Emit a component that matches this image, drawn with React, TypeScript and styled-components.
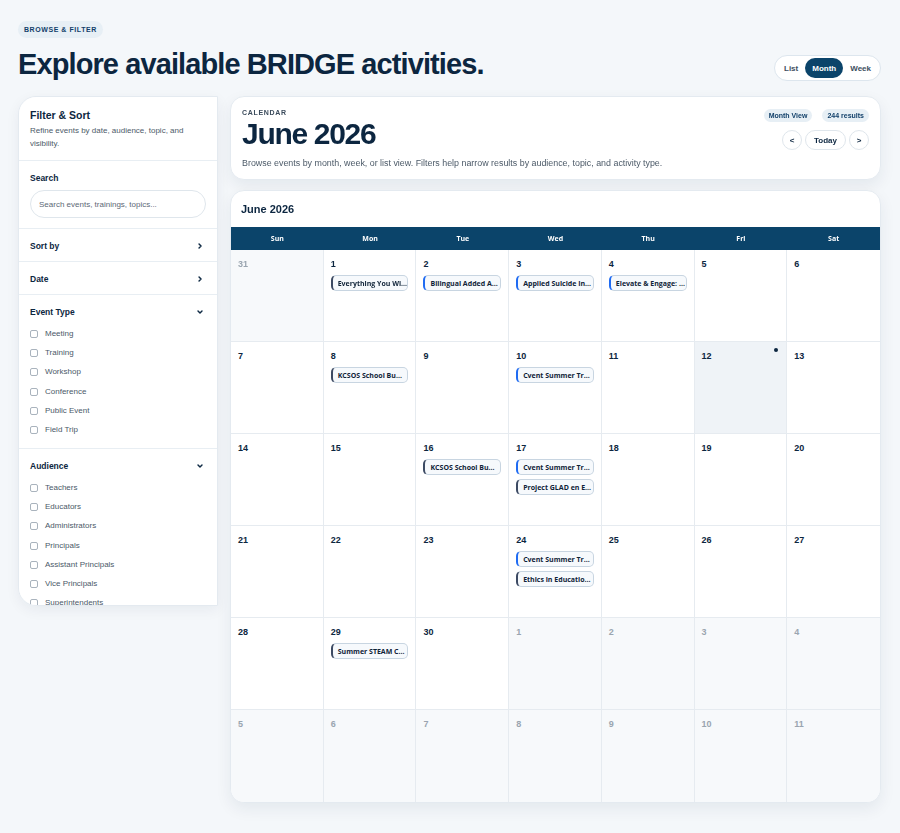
import React, { useState } from "react";
import styled, { createGlobalStyle } from "styled-components";

const GlobalStyle = createGlobalStyle`
  html, body {
    margin: 0;
    padding: 0;
    background: #f4f7fa;
    font-family: "Liberation Sans", Arial, sans-serif;
    color: #0f2a44;
    -webkit-font-smoothing: antialiased;
  }
  * { box-sizing: border-box; }
`;

type Ev = { title: string; tone: "blue" | "slate" };

const events: Record<number, Ev[]> = {
  1: [{ title: "Everything You Wi...", tone: "slate" }],
  2: [{ title: "Bilingual Added A...", tone: "blue" }],
  3: [{ title: "Applied Suicide In...", tone: "blue" }],
  4: [{ title: "Elevate & Engage: ...", tone: "blue" }],
  8: [{ title: "KCSOS School Bu...", tone: "slate" }],
  10: [{ title: "Cvent Summer Tr...", tone: "blue" }],
  16: [{ title: "KCSOS School Bu...", tone: "slate" }],
  17: [
    { title: "Cvent Summer Tr...", tone: "blue" },
    { title: "Project GLAD en E...", tone: "slate" },
  ],
  24: [
    { title: "Cvent Summer Tr...", tone: "blue" },
    { title: "Ethics in Educatio...", tone: "slate" },
  ],
  29: [{ title: "Summer STEAM C...", tone: "slate" }],
};

const weekdays = ["Sun", "Mon", "Tue", "Wed", "Thu", "Fri", "Sat"];

const eventTypes = ["Meeting", "Training", "Workshop", "Conference", "Public Event", "Field Trip"];
const audiences = [
  "Teachers",
  "Educators",
  "Administrators",
  "Principals",
  "Assistant Principals",
  "Vice Principals",
  "Superintendents",
  "Counselors",
  "Parents",
];
const visibility = ["Public", "Internal"];

const buildCells = () => {
  const cells: { day: number; outside: boolean }[] = [{ day: 31, outside: true }];
  for (let d = 1; d <= 30; d++) cells.push({ day: d, outside: false });
  for (let d = 1; d <= 11; d++) cells.push({ day: d, outside: true });
  return cells;
};

const Chevron = ({ open }: { open?: boolean }) => (
  <svg width="8" height="8" viewBox="0 0 10 10" fill="none">
    <path
      d={open ? "M2.5 3.8 L5 6.3 L7.5 3.8" : "M3.8 2.5 L6.3 5 L3.8 7.5"}
      stroke="#0f2a44"
      strokeWidth="1.8"
      strokeLinecap="round"
      strokeLinejoin="round"
    />
  </svg>
);

const App = () => {
  const [view, setView] = useState("Month");
  const cells = buildCells();

  return (
    <Page>
      <GlobalStyle />
      <TopBar>
        <div>
          <Eyebrow>Browse &amp; Filter</Eyebrow>
          <Title>Explore available BRIDGE activities.</Title>
        </div>
        <Toggle>
          {["List", "Month", "Week"].map((v) => (
            <ToggleBtn key={v} $active={view === v} onClick={() => setView(v)}>
              {v}
            </ToggleBtn>
          ))}
        </Toggle>
      </TopBar>

      <Layout>
        <Sidebar>
          <SideIntro>
            <SideTitle>Filter &amp; Sort</SideTitle>
            <SideText>Refine events by date, audience, topic, and visibility.</SideText>
          </SideIntro>
          <Section>
            <SectionLabel>Search</SectionLabel>
            <SearchInput placeholder="Search events, trainings, topics..." />
          </Section>
          <Section>
            <SectionHead>
              Sort by <Chevron />
            </SectionHead>
          </Section>
          <Section>
            <SectionHead>
              Date <Chevron />
            </SectionHead>
          </Section>
          <Section>
            <SectionHead>
              Event Type <Chevron open />
            </SectionHead>
            <CheckList>
              {eventTypes.map((t) => (
                <CheckRow key={t}>
                  <Box />
                  {t}
                </CheckRow>
              ))}
            </CheckList>
          </Section>
          <Section>
            <SectionHead>
              Audience <Chevron open />
            </SectionHead>
            <ScrollList>
              {audiences.map((t) => (
                <CheckRow key={t}>
                  <Box />
                  {t}
                </CheckRow>
              ))}
            </ScrollList>
          </Section>
          <Section>
            <SectionHead>
              Visibility <Chevron open />
            </SectionHead>
            <CheckList>
              {visibility.map((t) => (
                <CheckRow key={t}>
                  <Box />
                  {t}
                </CheckRow>
              ))}
            </CheckList>
          </Section>
        </Sidebar>

        <Main>
          <HeaderCard>
            <div>
              <Kicker>Calendar</Kicker>
              <MonthTitle>June 2026</MonthTitle>
              <HeaderText>
                Browse events by month, week, or list view. Filters help narrow results by audience, topic, and
                activity type.
              </HeaderText>
            </div>
            <HeaderSide>
              <Badges>
                <Badge>Month View</Badge>
                <Badge>244 results</Badge>
              </Badges>
              <NavRow>
                <NavBtn>&lt;</NavBtn>
                <NavBtn $wide>Today</NavBtn>
                <NavBtn>&gt;</NavBtn>
              </NavRow>
            </HeaderSide>
          </HeaderCard>

          <CalendarCard>
            <CalTitle>June 2026</CalTitle>
            <WeekHead>
              {weekdays.map((w) => (
                <WeekDay key={w}>{w}</WeekDay>
              ))}
            </WeekHead>
            <Grid>
              {cells.map((c, i) => {
                const today = !c.outside && c.day === 12;
                return (
                  <Cell key={i} $outside={c.outside} $today={today}>
                    <DayNum $outside={c.outside}>{c.day}</DayNum>
                    {today && <TodayDot />}
                    {!c.outside &&
                      (events[c.day] || []).map((e, j) => (
                        <Chip key={j} $tone={e.tone}>
                          {e.title}
                        </Chip>
                      ))}
                  </Cell>
                );
              })}
            </Grid>
          </CalendarCard>
        </Main>
      </Layout>
    </Page>
  );
};

const Page = styled.div`
  width: 900px;
  min-height: 833px;
  padding: 21px 19px 32px 18px;
`;

const TopBar = styled.div`
  display: flex;
  justify-content: space-between;
  align-items: flex-end;
  margin-bottom: 14px;
`;

const Eyebrow = styled.div`
  width: fit-content;
  background: #e7eff5;
  color: #12406a;
  font-size: 7px;
  line-height: 7px;
  font-weight: 700;
  letter-spacing: 0.08em;
  text-transform: uppercase;
  padding: 5px 6px;
  border-radius: 9px;
  margin-bottom: 8px;
`;

const Title = styled.h1`
  margin: 0;
  font-size: 29px;
  line-height: 36px;
  font-weight: 700;
  letter-spacing: -0.9px;
  color: #0c2640;
`;

const Toggle = styled.div`
  display: flex;
  align-items: center;
  background: #fff;
  border: 1px solid #dde6ee;
  border-radius: 14px;
  padding: 2px;
  margin-bottom: 1px;
`;

const ToggleBtn = styled.button<{ $active?: boolean }>`
  border: 0;
  cursor: pointer;
  font-family: "Liberation Sans", Arial, sans-serif;
  font-size: 8px;
  font-weight: 700;
  height: 20px;
  padding: 0 7px;
  border-radius: 10px;
  background: ${(p) => (p.$active ? "#0b446a" : "transparent")};
  color: ${(p) => (p.$active ? "#fff" : "#3d4e60")};
`;

const Layout = styled.div`
  display: grid;
  grid-template-columns: 200px 1fr;
  gap: 12px;
  align-items: start;
`;

const Sidebar = styled.aside`
  height: 510px;
  overflow-y: scroll;
  background: #fff;
  border: 1px solid #e4eaf0;
  border-radius: 18px 0 0 18px;
  box-shadow: 0 4px 14px rgba(15, 42, 68, 0.06);
  scrollbar-width: thin;
  scrollbar-color: #c2c2c2 #f1f1f1;
`;

const SideIntro = styled.div`
  padding: 12px 11px 10px;
  border-bottom: 1px solid #e8eef3;
`;

const SideTitle = styled.div`
  font-size: 10.5px;
  line-height: 12px;
  font-weight: 700;
  color: #0c2640;
  margin-bottom: 3px;
`;

const SideText = styled.div`
  font-size: 8px;
  line-height: 13px;
  color: #4c5a68;
`;

const Section = styled.div`
  padding: 12px 11px 10px;
  border-bottom: 1px solid #e8eef3;
`;

const SectionLabel = styled.div`
  font-size: 8.5px;
  line-height: 10px;
  font-weight: 700;
  color: #0c2640;
  margin-bottom: 7px;
`;

const SectionHead = styled.div`
  display: flex;
  justify-content: space-between;
  align-items: center;
  font-size: 8.5px;
  line-height: 10px;
  font-weight: 700;
  color: #0c2640;
  padding-right: 2px;
`;

const SearchInput = styled.input`
  width: 100%;
  height: 28px;
  border: 1px solid #dfe6ec;
  border-radius: 14px;
  padding: 0 8px;
  font-family: "Liberation Sans", Arial, sans-serif;
  font-size: 8px;
  color: #0c2640;
  outline: none;
  &::placeholder {
    color: #5d6976;
  }
`;

const CheckList = styled.div`
  display: flex;
  flex-direction: column;
  gap: 9.2px;
  margin-top: 12px;
  padding-bottom: 3px;
`;

const ScrollList = styled(CheckList)`
  max-height: 150px;
  overflow-y: scroll;
  scrollbar-width: thin;
  scrollbar-color: #c2c2c2 transparent;
`;

const CheckRow = styled.label`
  display: flex;
  align-items: center;
  gap: 7px;
  font-size: 8px;
  color: #4a5968;
  line-height: 10px;
  white-space: nowrap;
`;

const Box = styled.span`
  width: 8px;
  height: 8px;
  border: 1px solid #a9b3bd;
  border-radius: 2px;
  background: #fff;
  flex-shrink: 0;
`;

const Main = styled.div`
  display: flex;
  flex-direction: column;
  gap: 10px;
`;

const Card = styled.div`
  background: #fff;
  border: 1px solid #e4eaf0;
  border-radius: 14px;
  box-shadow: 0 6px 16px rgba(15, 42, 68, 0.07);
`;

const HeaderCard = styled(Card)`
  height: 84px;
  padding: 12px 11px 0 11px;
  display: flex;
  justify-content: space-between;
`;

const Kicker = styled.div`
  font-size: 7px;
  font-weight: 700;
  letter-spacing: 0.1em;
  text-transform: uppercase;
  color: #3b4b5c;
`;

const MonthTitle = styled.div`
  font-size: 30px;
  line-height: 32px;
  font-weight: 700;
  letter-spacing: -1.3px;
  color: #0c2640;
  margin-top: 2px;
`;

const HeaderText = styled.div`
  font-size: 8.9px;
  color: #4c5a68;
  margin-top: 8px;
  white-space: nowrap;
`;

const HeaderSide = styled.div`
  display: flex;
  flex-direction: column;
  align-items: flex-end;
  gap: 8px;
`;

const Badges = styled.div`
  display: flex;
  gap: 10px;
`;

const Badge = styled.span`
  background: #e7eff5;
  color: #12406a;
  font-size: 7px;
  font-weight: 700;
  padding: 3px 5px;
  border-radius: 7px;
`;

const NavRow = styled.div`
  display: flex;
  gap: 3px;
`;

const NavBtn = styled.button<{ $wide?: boolean }>`
  height: 20px;
  min-width: 20px;
  padding: 0 ${(p) => (p.$wide ? "8px" : "0")};
  border: 1px solid #dfe6ec;
  border-radius: 10px;
  background: #fff;
  font-family: "Liberation Sans", Arial, sans-serif;
  font-size: 8px;
  font-weight: 700;
  color: #0c2640;
  cursor: pointer;
`;

const CalendarCard = styled(Card)`
  overflow: hidden;
`;

const CalTitle = styled.div`
  height: 36px;
  padding: 12px 10px 0;
  font-size: 11px;
  font-weight: 700;
  color: #0c2640;
`;

const WeekHead = styled.div`
  display: grid;
  grid-template-columns: repeat(7, minmax(0, 1fr));
  background: #0b446a;
  height: 23px;
  align-items: center;
`;

const WeekDay = styled.div`
  text-align: center;
  font-family: "Open Sans", "Liberation Sans", sans-serif;
  font-size: 7px;
  font-weight: 700;
  color: #fff;
`;

const Grid = styled.div`
  display: grid;
  grid-template-columns: repeat(7, minmax(0, 1fr));
  grid-auto-rows: 92px;
`;

const Cell = styled.div<{ $outside?: boolean; $today?: boolean }>`
  position: relative;
  padding: 9px 7px 0;
  border-right: 1px solid #e6ebf0;
  border-bottom: 1px solid #e6ebf0;
  background: ${(p) => (p.$today ? "#eff3f7" : p.$outside ? "#f7f9fb" : "#fff")};
  display: flex;
  flex-direction: column;
  gap: 4px;

  &:nth-child(7n) {
    border-right: 0;
  }
  &:nth-last-child(-n + 7) {
    border-bottom: 0;
  }
`;

const DayNum = styled.div<{ $outside?: boolean }>`
  font-size: 9px;
  font-weight: 700;
  color: ${(p) => (p.$outside ? "#9aa5b0" : "#0c2640")};
  margin-bottom: 2px;
`;

const TodayDot = styled.span`
  position: absolute;
  top: 6px;
  right: 8px;
  width: 4px;
  height: 4px;
  border-radius: 50%;
  background: #0c2640;
`;

const Chip = styled.div<{ $tone: "blue" | "slate" }>`
  height: 16px;
  display: flex;
  align-items: center;
  padding: 0 5px;
  background: #f6f9fc;
  border: 1px solid #c8d5e1;
  border-left: 2px solid ${(p) => (p.$tone === "blue" ? "#1f6bf2" : "#3c4a63")};
  border-radius: 5px;
  font-family: "Open Sans", "Liberation Sans", sans-serif;
  font-size: 7px;
  font-weight: 700;
  color: #0f2338;
  white-space: nowrap;
  overflow: hidden;
`;

export default App;
